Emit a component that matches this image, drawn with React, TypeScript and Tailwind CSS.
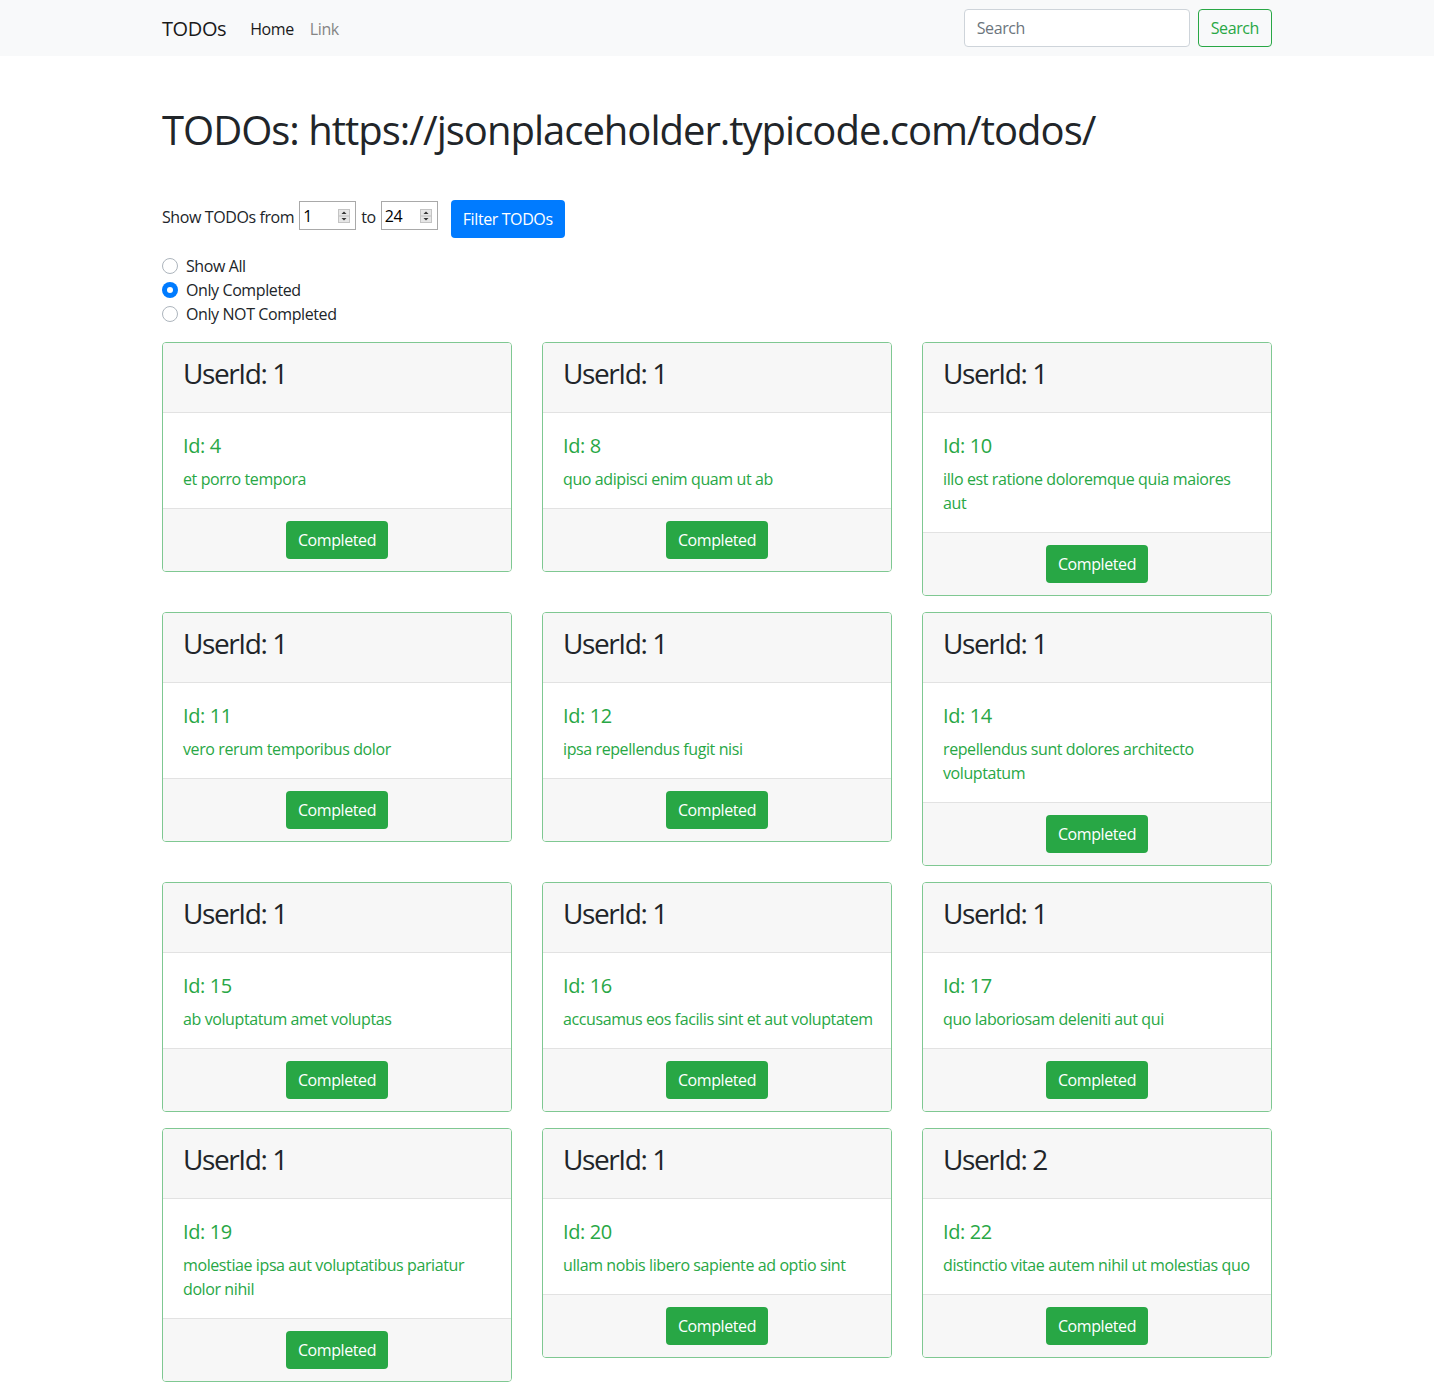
import React from "react";

type Todo = { userId: number; id: number; lines: string[] };

const todos: Todo[] = [
  { userId: 1, id: 4, lines: ["et porro tempora"] },
  { userId: 1, id: 8, lines: ["quo adipisci enim quam ut ab"] },
  { userId: 1, id: 10, lines: ["illo est ratione doloremque quia maiores", "aut"] },
  { userId: 1, id: 11, lines: ["vero rerum temporibus dolor"] },
  { userId: 1, id: 12, lines: ["ipsa repellendus fugit nisi"] },
  { userId: 1, id: 14, lines: ["repellendus sunt dolores architecto", "voluptatum"] },
  { userId: 1, id: 15, lines: ["ab voluptatum amet voluptas"] },
  { userId: 1, id: 16, lines: ["accusamus eos facilis sint et aut voluptatem"] },
  { userId: 1, id: 17, lines: ["quo laboriosam deleniti aut qui"] },
  { userId: 1, id: 19, lines: ["molestiae ipsa aut voluptatibus pariatur", "dolor nihil"] },
  { userId: 1, id: 20, lines: ["ullam nobis libero sapiente ad optio sint"] },
  { userId: 2, id: 22, lines: ["distinctio vitae autem nihil ut molestias quo"] },
];

function Spinner() {
  return (
    <svg width="12" height="14" viewBox="0 0 12 14" className="mr-[5px] shrink-0">
      <rect x="0.5" y="0.5" width="11" height="13" fill="#e6e6e6" stroke="#c4c4c4" />
      <line x1="1" y1="7" x2="11" y2="7" stroke="#bdbdbd" />
      <path d="M3.5 5 L6 2.5 L8.5 5 Z" fill="#333" />
      <path d="M3.5 9 L6 11.5 L8.5 9 Z" fill="#333" />
    </svg>
  );
}

function NumberBox({ value }: { value: string }) {
  return (
    <div className="flex h-[29px] w-[57px] items-center justify-between border border-[#a9a9a9] bg-white pl-[3px] text-[16px] leading-6 text-black">
      <span>{value}</span>
      <Spinner />
    </div>
  );
}

function Radio({ label, checked }: { label: string; checked?: boolean }) {
  return (
    <div className="flex h-6 items-center">
      {checked ? (
        <span className="flex h-4 w-4 items-center justify-center rounded-full bg-[#007bff]">
          <span className="h-[6px] w-[6px] rounded-full bg-white" />
        </span>
      ) : (
        <span className="h-4 w-4 rounded-full border border-[#adb5bd] bg-white" />
      )}
      <span className="ml-2 text-[16px] leading-6 text-[#212529]">{label}</span>
    </div>
  );
}

function Card({ t }: { t: Todo }) {
  return (
    <div className="overflow-hidden rounded-[4px] border border-[#7fc892] bg-white">
      <div className="h-[70px] border-b border-[#e2e2e2] bg-[#f7f7f7] px-5 pt-[13px]">
        <div className="text-[28px] leading-[34px] tracking-[-0.05em] text-[#212529]">UserId: {t.userId}</div>
      </div>
      <div className="px-5 pb-[17px] pt-[21px] text-[#28a745]">
        <div className="mb-[9px] text-[20px] leading-6">Id: {t.id}</div>
        {t.lines.map((l, i) => (
          <div key={i} className="whitespace-nowrap text-[16px] leading-6">
            {l}
          </div>
        ))}
      </div>
      <div className="flex justify-center border-t border-[#e2e2e2] bg-[#f7f7f7] px-5 py-3">
        <button className="h-[38px] rounded-[4px] bg-[#28a745] px-3 text-[16px] leading-6 text-white">
          Completed
        </button>
      </div>
    </div>
  );
}

export default function App() {
  return (
    <div
      className="min-h-[1399px] bg-white pb-4 tracking-[-0.025em] text-[#212529]"
      style={{ fontFamily: '"Segoe UI", "Open Sans", "Noto Sans", sans-serif' }}
    >
      <nav className="h-14 bg-[#f8f9fa]">
        <div className="mx-auto flex h-14 w-[1140px] items-center px-[15px]">
          <span className="mr-4 mt-[2px] text-[20px] leading-[30px] text-[#1a1a1a]">TODOs</span>
          <span className="mt-[2px] px-2 text-[16px] leading-6 text-[#1a1a1a]">Home</span>
          <span className="mt-[2px] px-2 text-[16px] leading-6 text-[#858585]">Link</span>
          <div className="ml-auto flex items-center">
            <div className="flex h-[38px] w-[226px] items-center rounded-[4px] border border-[#ced4da] bg-white px-3 text-[16px] text-[#6c757d]">
              Search
            </div>
            <button className="ml-2 h-[38px] rounded-[4px] border border-[#28a745] px-3 text-[16px] text-[#28a745]">
              Search
            </button>
          </div>
        </div>
      </nav>

      <main className="mx-auto w-[1140px] px-[15px]">
        <h1 className="mt-[50px] text-[40px] font-normal leading-[48px] tracking-[-0.025em] text-[#212529]">
          TODOs: https://jsonplaceholder.typicode.com/todos/
        </h1>

        <div className="mt-[46px] flex items-start">
          <span className="mr-[5px] mt-[5px] text-[16px] leading-6">Show TODOs from</span>
          <div className="mt-px">
            <NumberBox value="1" />
          </div>
          <span className="mx-[5px] mt-[5px] text-[16px] leading-6">to</span>
          <div className="mt-px">
            <NumberBox value="24" />
          </div>
          <button className="ml-[13px] h-[38px] rounded-[4px] bg-[#007bff] px-3 text-[16px] leading-6 text-white">
            Filter TODOs
          </button>
        </div>

        <div className="mt-4 flex flex-col">
          <Radio label="Show All" />
          <Radio label="Only Completed" checked />
          <Radio label="Only NOT Completed" />
        </div>

        <div className="mt-4 grid grid-cols-3 items-start gap-x-[30px] gap-y-4">
          {todos.map((t) => (
            <Card key={t.id} t={t} />
          ))}
        </div>
      </main>
    </div>
  );
}
